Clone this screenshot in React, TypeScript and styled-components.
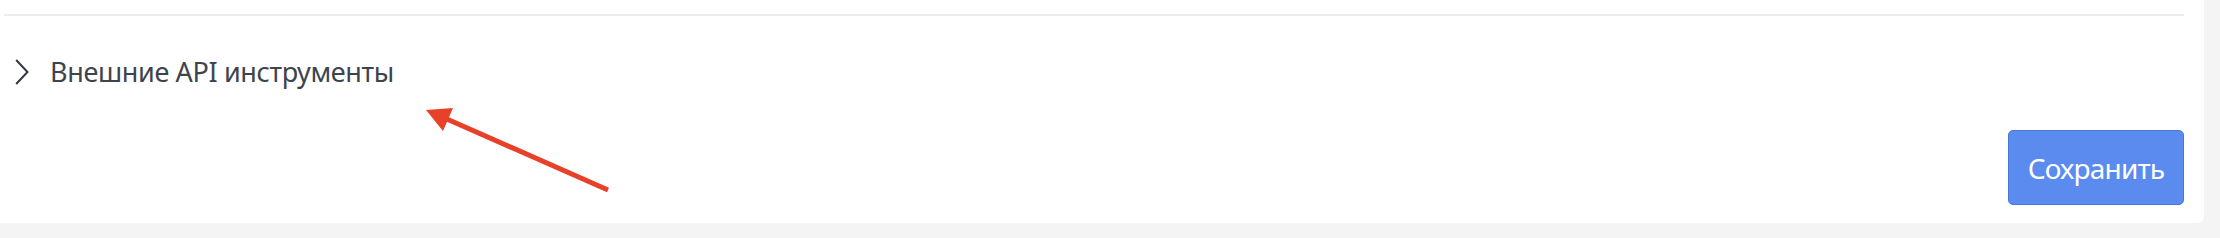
import React from 'react'
import styled, { createGlobalStyle } from 'styled-components'

const GlobalStyle = createGlobalStyle`
  html, body {
    margin: 0;
    padding: 0;
    background: #f4f4f4;
  }
  body {
    font-family: 'Noto Sans', 'Open Sans', sans-serif;
  }
`

const Page = styled.div`
  position: relative;
  width: 2220px;
  height: 238px;
  background: #f4f4f4;
`

const Card = styled.div`
  width: 2204px;
  height: 223px;
  box-sizing: border-box;
  background: #ffffff;
  border-bottom-right-radius: 6px;
  padding: 14px 20px 0 4px;
  display: flex;
  flex-direction: column;
`

const Divider = styled.div`
  height: 2px;
  background: #ebebf0;
`

const SectionHeader = styled.div`
  display: flex;
  align-items: center;
  gap: 21px;
  margin-top: 41px;
  padding-left: 11px;
  height: 30px;
  cursor: pointer;
`

const Title = styled.span`
  font-size: 27px;
  letter-spacing: -0.35px;
  line-height: 30px;
  color: #3e434c;
`

const Footer = styled.div`
  display: flex;
  justify-content: flex-end;
  margin-top: 43px;
`

const SaveButton = styled.button`
  width: 176px;
  height: 75px;
  box-sizing: border-box;
  border: 1px solid #4a76d6;
  border-radius: 5px;
  background: #5b8bef;
  color: #ffffff;
  font-family: 'Noto Sans', 'Open Sans', sans-serif;
  font-size: 28px;
  letter-spacing: -0.8px;
  padding: 0;
  cursor: pointer;
`

const Annotation = styled.svg`
  position: absolute;
  left: 0;
  top: 0;
  pointer-events: none;
`

const Chevron = () => (
  <svg width="14" height="26" viewBox="0 0 14 26">
    <path d="M1.2 1 L12.5 13 L1.2 25" fill="none" stroke="#333840" strokeWidth="2" />
  </svg>
)

export default function App() {
  return (
    <Page>
      <GlobalStyle />
      <Card>
        <Divider />
        <SectionHeader>
          <Chevron />
          <Title>Внешние API инструменты</Title>
        </SectionHeader>
        <Footer>
          <SaveButton>Сохранить</SaveButton>
        </Footer>
      </Card>
      <Annotation width="2220" height="238">
        <line x1="608" y1="190" x2="440" y2="116" stroke="#e8412a" strokeWidth="5" />
        <polygon points="426,110 453,108 443,131" fill="#e8412a" />
      </Annotation>
    </Page>
  )
}
